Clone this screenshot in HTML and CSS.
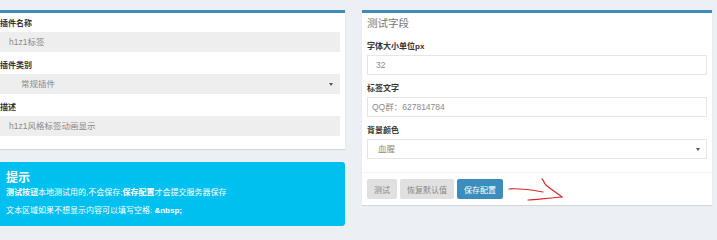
FILE: index.html
```html
<!DOCTYPE html>
<html>
<head>
    <meta charset="utf-8">
    <title>h1z1标签 插件配置</title>
    <link rel="stylesheet" href="styles.css">
</head>
<body>
    <div class="content">
        <div class="col">
            <div class="box">
                <div class="box-body">
                    <div class="form-group">
                        <label>插件名称</label>
                        <div class="input disabled">h1z1标签</div>
                    </div>
                    <div class="form-group">
                        <label>插件类别</label>
                        <div class="input disabled select indent">常规插件</div>
                    </div>
                    <div class="form-group">
                        <label>描述</label>
                        <div class="input disabled">h1z1风格标签动画显示</div>
                    </div>
                </div>
            </div>

            <div class="callout">
                <h4>提示</h4>
                <p><b>测试按钮</b>本地测试用的,不会保存;<b>保存配置</b>才会提交服务器保存</p>
                <p>文本区域如果不想显示内容可以填写空格: <b>&amp;nbsp;</b></p>
            </div>
        </div>

        <div class="col">
            <div class="box">
                <div class="box-header">测试字段</div>
                <div class="box-body">
                    <div class="form-group">
                        <label>字体大小单位px</label>
                        <div class="input">32</div>
                    </div>
                    <div class="form-group">
                        <label>标签文字</label>
                        <div class="input tight">QQ群：627814784</div>
                    </div>
                    <div class="form-group">
                        <label>背景颜色</label>
                        <div class="input select">血腥</div>
                    </div>
                </div>
                <div class="box-footer">
                    <button class="btn">测试</button>
                    <button class="btn">恢复默认值</button>
                    <button class="btn primary">保存配置</button>
                    <!-- hand-drawn annotation arrow -->
                    <svg class="scribble" width="60" height="28" viewBox="0 0 60 28">
                        <path d="M2 12 C12 11 25 13 36 15" />
                        <path d="M35 2 C38 5 37 7 40 9 C45 13 50 16 55 20" />
                        <path d="M55 20 C45 21 32 22 21 23" />
                    </svg>
                </div>
            </div>
        </div>
    </div>
</body>
</html>
```

FILE: styles.css
```css
body { margin: 0; background: #ecf0f5; font-family: "Liberation Sans", "Noto Sans CJK SC", sans-serif; color: #333; }
.content { display: flex; gap: 17px; margin-left: -5px; padding-top: 10px; }
.col { width: 350px; }

.box { background: #fff; border-top: 3px solid #3c8dbc; box-shadow: 0 1px 1px rgba(0,0,0,.1); }
.box-header { padding: 3px 5px 6px; font-size: 10.5px; line-height: 14px; color: #777; }
.box-body { padding: 4px 5px 6px; }
.box-footer { position: relative; border-top: 1px solid #f4f4f4; padding: 6px 5px; display: flex; gap: 3px; }

.form-group { margin-bottom: 7px; }
label { display: block; font-size: 8px; line-height: 14px; font-weight: bold; margin-bottom: 1px; color: #333; }
.input { position: relative; height: 20px; line-height: 18px; box-sizing: border-box; border: 1px solid #e6e6e6; padding: 0 8px; font-size: 8.5px; color: #8a8a8a; background: #fff; }
.input.disabled { background: #eee; border-color: #eee; }
.input.tight { padding-left: 4px; }
.input.indent { padding-left: 20px; }
.input.select { padding-left: 10px; }
.input.select.indent { padding-left: 20px; }
.input.select::after { content: ""; position: absolute; right: 6px; top: 8px; border: 2px solid transparent; border-top: 3px solid #555; border-bottom: 0; }

.callout { margin-top: 13px; background: #00c0ef; border-left: 4px solid #0097bc; border-radius: 3px; padding: 8px 10px 8px 7px; color: #fff; }
.callout h4 { margin: 0; font-size: 12px; line-height: 16px; font-weight: bold; }
.callout p { margin: 0; font-size: 8px; line-height: 14px; }
.callout p + p { margin-top: 4px; }

.btn { height: 20px; padding: 0 7px; border: none; border-radius: 2px; font-family: inherit; font-size: 8px; background: #e0e0e0; color: #888; }
.btn.primary { background: #3c8dbc; color: #fff; }

.scribble { position: absolute; left: 145px; top: 4px; fill: none; stroke: #d9262b; stroke-width: 1.2; stroke-linecap: round; }
```
